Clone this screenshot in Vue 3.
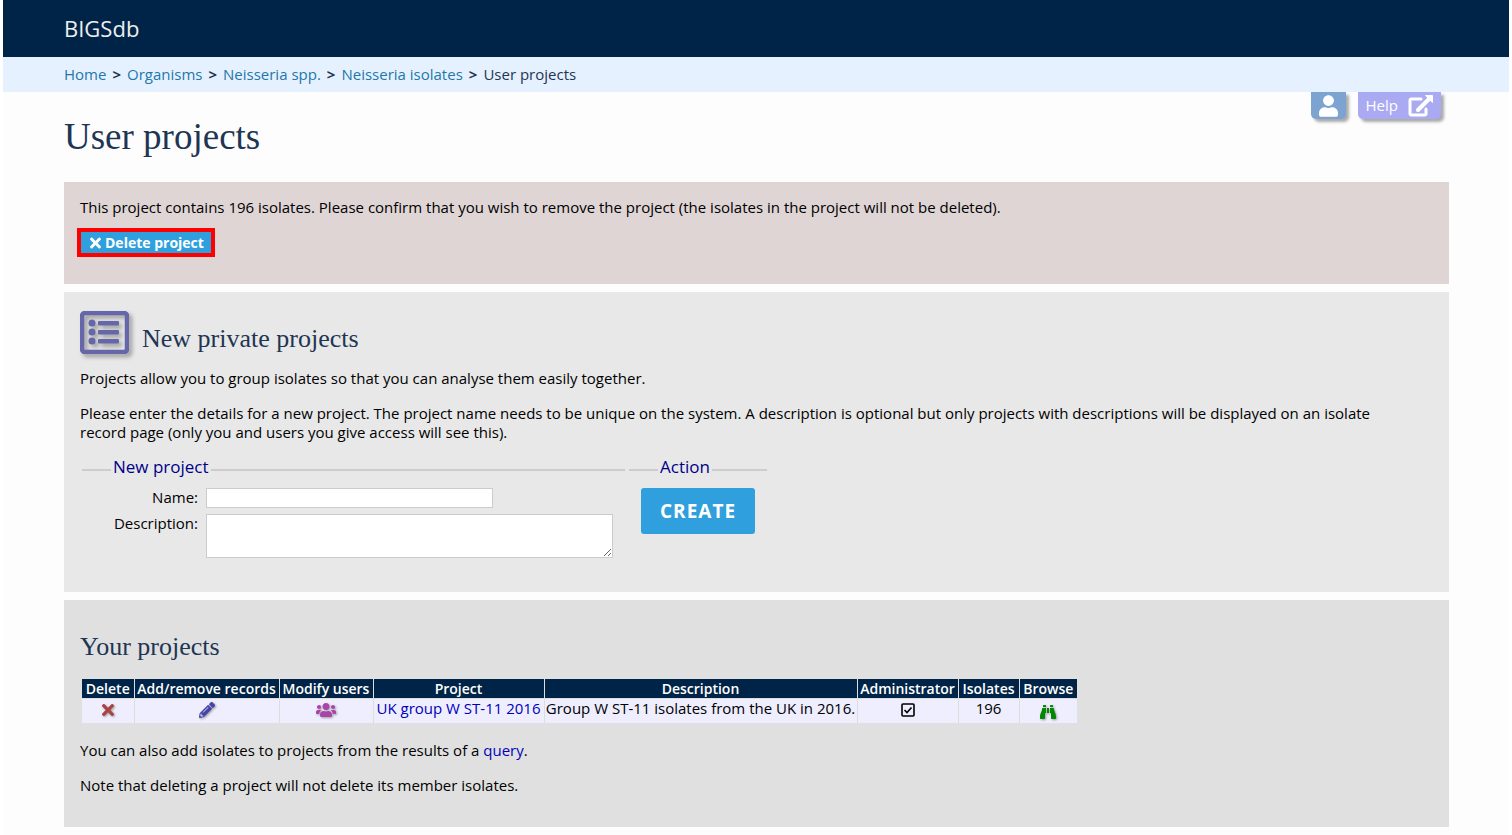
<script setup>
import { ref } from 'vue'

const breadcrumbs = ['Home', 'Organisms', 'Neisseria spp.', 'Neisseria isolates']

const columns = [
  { label: 'Delete', width: 52 },
  { label: 'Add/remove records', width: 145 },
  { label: 'Modify users', width: 94 },
  { label: 'Project', width: 171 },
  { label: 'Description', width: 313 },
  { label: 'Administrator', width: 101 },
  { label: 'Isolates', width: 61 },
  { label: 'Browse', width: 58 },
]

const projects = ref([
  {
    name: 'UK group W ST-11 2016',
    description: 'Group W ST-11 isolates from the UK in 2016.',
    isolates: 196,
  },
])

const name = ref('')
const description = ref('')

// add a new project with no isolates
function create() {
  if (!name.value) return
  projects.value.push({ name: name.value, description: description.value, isolates: 0 })
  name.value = ''
  description.value = ''
}

function remove(index) {
  projects.value.splice(index, 1)
}
</script>

<template>
  <div class="page">
    <header class="banner">BIGSdb</header>

    <nav class="breadcrumbs">
      <template v-for="crumb in breadcrumbs" :key="crumb">
        <a href="#">{{ crumb }}</a>
        <b>&gt;</b>
      </template>
      <span>User projects</span>
    </nav>

    <main>
      <div class="title-row">
        <h1>User projects</h1>
        <div class="tabs">
          <a class="tab user" href="#" aria-label="User">
            <svg width="19" height="22" viewBox="0 0 448 512" fill="currentColor">
              <path d="M224 256c70.7 0 128-57.3 128-128S294.7 0 224 0 96 57.3 96 128s57.3 128 128 128zm89.6 32h-16.7c-22.2 10.2-46.9 16-72.9 16s-50.6-5.8-72.9-16h-16.7C60.2 288 0 348.2 0 422.4V464c0 26.5 21.5 48 48 48h352c26.5 0 48-21.5 48-48v-41.6c0-74.2-60.2-134.4-134.4-134.4z" />
            </svg>
          </a>
          <a class="tab help" href="#">
            Help
            <svg width="25" height="22" viewBox="0 0 25 22" fill="none" stroke="currentColor">
              <path d="M13 4H3.5Q2 4 2 5.5V18.500Q2 20 3.500 20H16.500Q18 20 18 18.500V14" stroke-width="3" stroke-linecap="round" />
              <path d="M10 15L21 4" stroke-width="4" stroke-linecap="round" />
              <path d="M17.500 0.500H24.500V7.500Z" fill="currentColor" stroke-linejoin="round" />
            </svg>
          </a>
        </div>
      </div>

      <!-- confirm deletion -->
      <section class="box confirm">
        <p>This project contains 196 isolates. Please confirm that you wish to remove the project (the isolates in the project will not be deleted).</p>
        <button class="delete" type="button" @click="remove(0)">
          <svg width="11" height="16" viewBox="0 0 352 512" fill="currentColor">
            <path d="M242.72 256l100.07-100.07c12.28-12.28 12.28-32.19 0-44.48l-22.24-22.24c-12.28-12.28-32.19-12.28-44.48 0L176 189.28 75.93 89.21c-12.28-12.28-32.19-12.28-44.48 0L9.21 111.45c-12.28 12.28-12.28 32.19 0 44.48L109.28 256 9.21 356.07c-12.28 12.28-12.28 32.19 0 44.48l22.24 22.24c12.28 12.28 32.2 12.28 44.48 0L176 322.72l100.07 100.07c12.28 12.28 32.2 12.28 44.48 0l22.24-22.24c12.28-12.28 12.28-32.19 0-44.48L242.72 256z" />
          </svg>
          Delete project
        </button>
      </section>

      <!-- new project form -->
      <section class="box new">
        <div class="heading">
          <svg class="shadow" width="49" height="43" viewBox="0 0 49 43" fill="#66a">
            <rect x="2" y="2" width="45" height="39" rx="3" fill="none" stroke="#66a" stroke-width="4.5" />
            <circle cx="12" cy="12" r="3.5" />
            <circle cx="12" cy="21" r="3.5" />
            <circle cx="12" cy="30" r="3.5" />
            <rect x="18" y="10" width="21" height="4.500" rx="1" />
            <rect x="18" y="19" width="21" height="4.500" rx="1" />
            <rect x="18" y="28" width="21" height="4.500" rx="1" />
          </svg>
          <h2>New private projects</h2>
        </div>
        <p>Projects allow you to group isolates so that you can analyse them easily together.</p>
        <p>Please enter the details for a new project. The project name needs to be unique on the system. A description is optional but only projects with descriptions will be displayed on an isolate record page (only you and users you give access will see this).</p>
        <form @submit.prevent="create">
          <fieldset>
            <legend>New project</legend>
            <div class="fields">
              <label for="name">Name:</label>
              <input id="name" v-model="name" type="text" />
              <label for="description">Description:</label>
              <textarea id="description" v-model="description"></textarea>
            </div>
          </fieldset>
          <fieldset>
            <legend>Action</legend>
            <button class="create" type="submit">CREATE</button>
          </fieldset>
        </form>
      </section>

      <!-- existing projects -->
      <section class="box existing">
        <h2>Your projects</h2>
        <table>
          <thead>
            <tr>
              <th v-for="col in columns" :key="col.label" :style="{ width: col.width + 'px' }">{{ col.label }}</th>
            </tr>
          </thead>
          <tbody>
            <tr v-for="(project, index) in projects" :key="index">
              <td>
                <a href="#" aria-label="Delete" @click.prevent="remove(index)">
                  <svg class="shadow" width="12" height="18" viewBox="0 0 352 512" fill="#a44">
                    <path d="M242.72 256l100.07-100.07c12.28-12.28 12.28-32.19 0-44.48l-22.24-22.24c-12.28-12.28-32.19-12.28-44.48 0L176 189.28 75.93 89.21c-12.28-12.28-32.19-12.28-44.48 0L9.21 111.45c-12.28 12.28-12.28 32.19 0 44.48L109.28 256 9.21 356.07c-12.28 12.28-12.28 32.19 0 44.48l22.24 22.24c12.28 12.28 32.2 12.28 44.48 0L176 322.72l100.07 100.07c12.28 12.28 32.2 12.28 44.48 0l22.24-22.24c12.28-12.28 12.28-32.19 0-44.48L242.72 256z" />
                  </svg>
                </a>
              </td>
              <td>
                <a href="#" aria-label="Add or remove records">
                  <svg class="shadow" width="16" height="18" viewBox="0 0 512 512" fill="#44a">
                    <path d="M497.9 142.1l-46.1 46.1c-4.7 4.7-12.3 4.7-17 0l-111-111c-4.7-4.7-4.7-12.3 0-17l46.1-46.1c18.7-18.7 49.1-18.7 67.9 0l60.1 60.1c18.8 18.7 18.8 49.1 0 67.9zM284.2 99.8L21.6 362.4.4 483.9c-2.9 16.4 11.4 30.6 27.8 27.8l121.5-21.3 262.6-262.6c4.7-4.7 4.7-12.3 0-17l-111-111c-4.8-4.7-12.4-4.7-17.1 0zM124.1 339.9c-5.5-5.5-5.5-14.3 0-19.8l154-154c5.5-5.5 14.3-5.5 19.8 0s5.5 14.3 0 19.8l-154 154c-5.5 5.5-14.3 5.5-19.8 0zM88 424h48v36.3l-64.5 11.3-31.1-31.1L51.7 376H88v48z" />
                  </svg>
                </a>
              </td>
              <td>
                <a href="#" aria-label="Modify users">
                  <svg class="shadow" width="20" height="18" viewBox="0 0 640 512" fill="#a4a">
                    <path d="M96 224c35.3 0 64-28.7 64-64s-28.7-64-64-64-64 28.7-64 64 28.7 64 64 64zm448 0c35.3 0 64-28.7 64-64s-28.7-64-64-64-64 28.7-64 64 28.7 64 64 64zm32 32h-64c-17.6 0-33.5 7.1-45.1 18.6 40.3 22.1 68.9 62 75.1 109.4h66c17.7 0 32-14.3 32-32v-32c0-35.3-28.7-64-64-64zm-256 0c61.9 0 112-50.1 112-112S381.9 32 320 32 208 82.1 208 144s50.1 112 112 112zm76.8 32h-8.3c-20.8 10-43.9 16-68.5 16s-47.6-6-68.5-16h-8.3C179.6 288 128 339.6 128 403.2V432c0 26.5 21.5 48 48 48h288c26.5 0 48-21.5 48-48v-28.8c0-63.6-51.6-115.2-115.2-115.2zm-223.7-13.4C161.5 263.1 145.6 256 128 256H64c-35.3 0-64 28.7-64 64v32c0 17.7 14.3 32 32 32h65.9c6.3-47.4 34.9-87.3 75.2-109.4z" />
                  </svg>
                </a>
              </td>
              <td><a href="#">{{ project.name }}</a></td>
              <td>{{ project.description }}</td>
              <td>
                <svg width="14" height="14" viewBox="0 0 14 14" fill="none" stroke="#000">
                  <rect x="1" y="1" width="12" height="12" rx="1" stroke-width="1.6" />
                  <path d="M3.500 7L6 9.500L10.500 4.500" stroke-width="1.6" />
                </svg>
              </td>
              <td>{{ project.isolates }}</td>
              <td class="browse">
                <a href="#" aria-label="Browse">
                  <svg class="shadow" width="16" height="18" viewBox="0 0 512 512" fill="#080">
                    <path d="M416 48c0-8.84-7.16-16-16-16h-64c-8.84 0-16 7.16-16 16v48h96V48zM63.91 159.99C61.4 253.84 3.46 274.22 0 404v44c0 17.67 14.33 32 32 32h96c17.67 0 32-14.33 32-32V288h32V128H95.84c-17.63 0-31.45 14.37-31.93 31.99zm384.18 0c-.48-17.62-14.3-31.99-31.93-31.99H320v160h32v160c0 17.67 14.33 32 32 32h96c17.67 0 32-14.33 32-32v-44c-3.46-129.78-61.4-150.16-63.91-244.01zM176 32h-64c-8.84 0-16 7.16-16 16v48h96V48c0-8.84-7.16-16-16-16zm48 256h64V128h-64v160z" />
                  </svg>
                </a>
              </td>
            </tr>
          </tbody>
        </table>
        <p>You can also add isolates to projects from the results of a <a href="#">query</a>.</p>
        <p>Note that deleting a project will not delete its member isolates.</p>
      </section>
    </main>
  </div>
</template>

<style>
body {
  background-color: #fff;
}
</style>

<style scoped>
.page {
  margin: 0 3px;
  padding-bottom: 8px;
  background-color: #fdfdfd;
  color: #000;
  font: 15px/19px 'Open Sans', 'Noto Sans', sans-serif;
}

a {
  color: #00b;
  text-decoration: none;
}

svg {
  flex: none;
}

button,
input,
textarea {
  box-sizing: border-box;
  margin: 0;
  font-family: inherit;
}

/* ---------- banner ---------- */
.banner {
  padding: 0 61px;
  background-color: #002447;
  color: #eee;
  font-size: 22px;
  line-height: 57px;
}

.breadcrumbs {
  display: flex;
  gap: 6px;
  padding: 0 61px;
  background-color: #e6f1ff;
  color: #1e3553;
  line-height: 35px;
}

.breadcrumbs a {
  color: #27a;
}

main {
  padding: 0 60px 0 61px;
}

.title-row {
  display: flex;
  justify-content: space-between;
  align-items: flex-start;
  height: 90px;
}

h1,
h2 {
  margin: 0;
  color: #1e3553;
  font-family: 'Liberation Serif', serif;
  font-weight: normal;
}

h1 {
  font-size: 37px;
  line-height: 90px;
}

h2 {
  font-size: 26px;
  line-height: 30px;
}

.tabs {
  display: flex;
  gap: 12px;
  padding-right: 8px;
}

.tab {
  display: flex;
  align-items: center;
  gap: 10px;
  height: 27px;
  padding: 0 8px;
  border-radius: 0 0 5px 5px;
  box-shadow: 3px 3px 3px #aaa;
  color: #fff;
}

.user {
  background-color: #7da3d1;
}

.help {
  background-color: #aaaaf3;
}

/* ---------- boxes ---------- */
.box {
  margin-bottom: 8px;
  padding: 16px;
}

.box:last-child {
  margin-bottom: 0;
}

p {
  margin: 0 0 16px;
}

.confirm {
  padding-bottom: 30px;
  background-color: #dfd5d5;
}

.confirm p {
  margin-bottom: 14px;
}

.delete {
  display: flex;
  align-items: center;
  gap: 4px;
  height: 23px;
  padding: 0 8px 0 10px;
  border: none;
  outline: 4px solid #f00;
  outline-offset: -1px;
  background-color: #2f9fde;
  color: #fff;
  font-size: 14px;
  font-weight: bold;
}

.new {
  padding-bottom: 34px;
  background-color: #e8e8e8;
}

.new p {
  padding-right: 48px;
}

.heading {
  display: flex;
  align-items: flex-end;
  gap: 13px;
  height: 46px;
  margin-bottom: 15px;
}

.shadow {
  filter: drop-shadow(3px 3px 2px #999);
}

td .shadow {
  filter: drop-shadow(1px 1px 1px #999);
}

/* ---------- form ---------- */
form {
  display: flex;
  gap: 4px;
  padding: 1px 0 0 2px;
}

fieldset {
  margin: 0;
  padding: 7px 12px 0;
  border: none;
  border-top: 2px solid #ccc;
}

legend {
  margin-left: 17px;
  padding: 0 2px 6px;
  color: #008;
  font-size: 17px;
  line-height: 16px;
}

.fields {
  display: grid;
  grid-template-columns: 104px auto;
  gap: 6px 8px;
}

.fields label {
  text-align: right;
}

input,
textarea {
  border: 1px solid #ccc;
  background-color: #fff;
  font-size: 15px;
}

input {
  width: 287px;
  height: 20px;
}

textarea {
  width: 407px;
  height: 44px;
}

.create {
  height: 46px;
  padding: 0 19px;
  border: none;
  border-radius: 3px;
  background-color: #2f9fde;
  color: #fff;
  font-size: 19px;
  font-weight: bold;
  letter-spacing: 1px;
}

/* ---------- projects table ---------- */
.existing {
  padding-top: 32px;
  background-color: #e0e0e0;
}

table {
  margin: 17px 0 18px 2px;
  border-collapse: collapse;
  table-layout: fixed;
  width: 995px;
}

th,
td {
  box-sizing: border-box;
  padding: 0;
  border-right: 1px solid #ddd;
  text-align: center;
  white-space: nowrap;
}

th:last-child,
td:last-child {
  border-right: none;
}

th {
  height: 19px;
  background-color: #002447;
  color: #fff;
  font-size: 14px;
  font-weight: 600;
}

td {
  height: 24px;
  padding-bottom: 4px;
  border-top: 1px solid #ddd;
  background-color: #eef;
}

td.browse {
  padding-bottom: 0;
}

td svg {
  vertical-align: middle;
}
</style>
